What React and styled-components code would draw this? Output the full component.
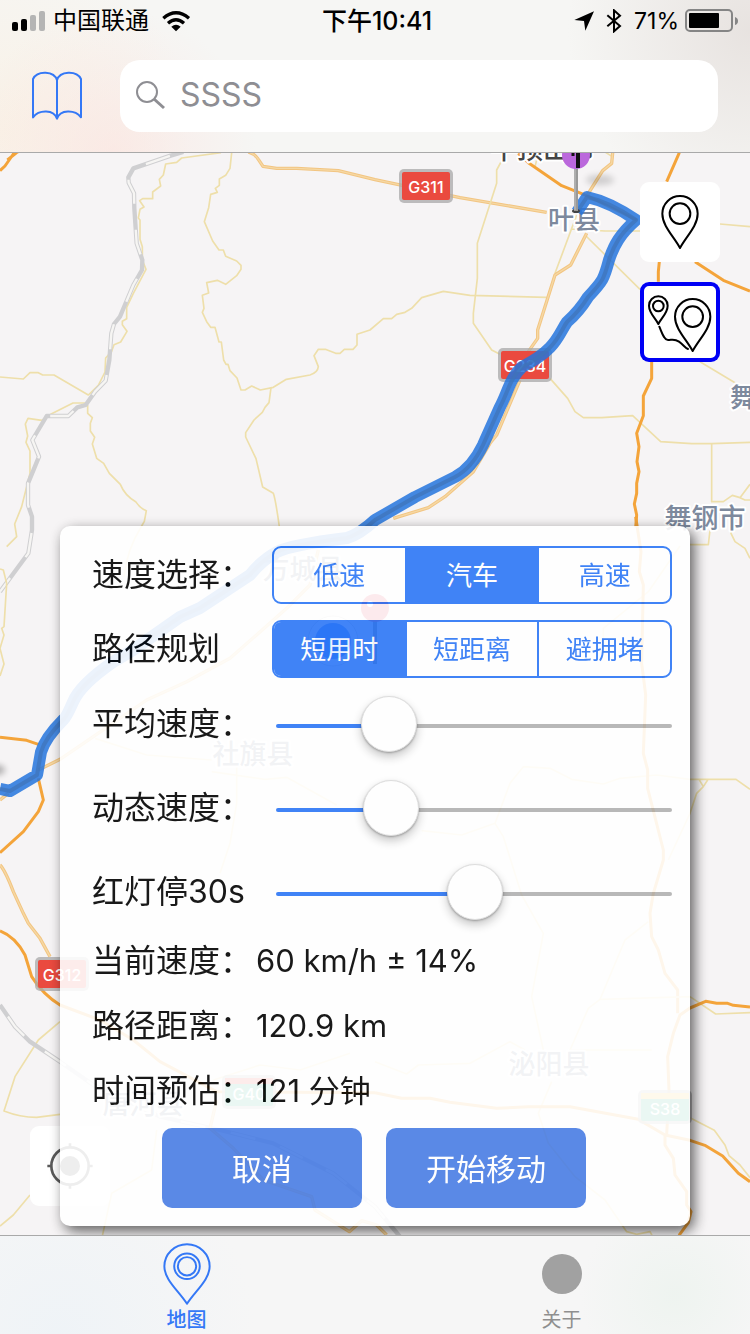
import React, { useState } from "react";
import styled, { createGlobalStyle, css } from "styled-components";

const BLUE = "#2c77f7";

const GlobalStyle = createGlobalStyle`
  *, *::before, *::after { box-sizing: border-box; }
  body {
    margin: 0;
    font-family: Inter, "Noto Sans CJK SC", sans-serif;
    color: #000;
  }
  button, input { font: inherit; }
`;

const Page = styled.div`
  min-height: 100vh;
  display: flex;
  flex-direction: column;
`;

/* ---------- header ---------- */

const Header = styled.header`
  border-bottom: 1px solid #a9a9a9;
  background:
    radial-gradient(circle at 15% 100%, rgba(252, 226, 222, 0.6), transparent 22%),
    radial-gradient(circle at 0% 85%, rgba(250, 240, 225, 0.7), transparent 25%),
    radial-gradient(circle at 100% 20%, rgba(228, 222, 219, 0.8), transparent 24%),
    #f6f6f4;
`;

const StatusBar = styled.div`
  height: 40px;
  padding: 2px 12px 0;
  display: grid;
  grid-template-columns: 1fr auto 1fr;
  align-items: center;
  font-size: 24px;
  line-height: 38px;
`;

const StatusGroup = styled.div`
  display: flex;
  align-items: center;
  gap: ${(p) => p.$gap}px;
  justify-content: ${(p) => (p.$end ? "flex-end" : "flex-start")};
`;

const Time = styled.time`
  padding-left: 4px;
  font-size: 25px;
  font-weight: 500;
`;

const Signal = styled.div`
  display: flex;
  align-items: flex-end;
  gap: 3px;
`;

const SignalBar = styled.span`
  width: 6px;
  height: ${(p) => p.$height}px;
  border-radius: 2px;
  background: ${(p) => (p.$on ? "#000" : "#b5b5b4")};
`;

const Percent = styled.span`
  font-size: 23px;
`;

const NavRow = styled.div`
  display: flex;
  align-items: center;
  gap: 36px;
  padding: 20px 32px;
`;

const BookButton = styled.button`
  display: flex;
  padding: 0;
  border: 0;
  background: none;
  color: #3478f6;
`;

const SearchBox = styled.label`
  flex: 1;
  min-width: 0;
  height: 72px;
  display: flex;
  align-items: center;
  gap: 14px;
  padding: 0 16px 2px;
  border-radius: 20px;
  background: #fff;
  color: #8e8e93;
`;

const SearchInput = styled.input`
  flex: 1;
  width: 100%;
  min-width: 0;
  padding: 0;
  border: 0;
  outline: 0;
  background: none;
  font-size: 32px;
  line-height: 40px;
  color: #8e8e93;
  &::placeholder { color: #8e8e93; opacity: 1; }
`;

/* ---------- map ---------- */

const MapArea = styled.main`
  position: relative;
  flex: 1;
  display: flex;
  flex-direction: column;
  justify-content: space-between;
  overflow: hidden;
  background: #f6f4f5;
`;

const MapSvg = styled.svg`
  position: absolute;
  inset: 0;
  width: 100%;
  height: 100%;
`;

const MapTools = styled.div`
  position: relative;
  display: flex;
  flex-direction: column;
  align-items: flex-end;
  gap: 20px;
  padding: 29px 30px;
`;

const MapButton = styled.button`
  display: flex;
  padding: 0;
  width: 80px;
  height: 80px;
  border: 0;
  border-radius: 9px;
  background: #fff;
  ${(p) => p.$active && css`box-shadow: inset 0 0 0 4px #0000f5;`}
`;

const LocateButton = styled(MapButton)`
  position: absolute;
  left: 30px;
  bottom: 29px;
`;

/* ---------- panel ---------- */

const Panel = styled.section`
  position: relative;
  margin: 0 60px 9px;
  padding: 20px 18px 18px 32px;
  border-radius: 10px;
  background: #fff;
  opacity: 0.9;
  box-shadow: 4px 5px 14px rgba(0, 0, 0, 0.7);
  font-size: 32px;
`;

const Stack = styled.div`
  display: flex;
  flex-direction: column;
  gap: ${(p) => p.$gap}px;
  margin-bottom: ${(p) => p.$after}px;
`;

const FieldRow = styled.div`
  display: grid;
  grid-template-columns: 180px 1fr;
  align-items: center;
  white-space: nowrap;
`;

const fieldName = css`
  line-height: 48px;
`;

const GroupName = styled.span`${fieldName}`;
const FieldName = styled.label`${fieldName}`;

const Segments = styled.div`
  display: flex;
  height: 58px;
  border: 2px solid ${BLUE};
  border-radius: 9px;
  overflow: hidden;
`;

const Segment = styled.label`
  position: relative;
  flex: 1;
  display: flex;
  align-items: center;
  justify-content: center;
  padding-bottom: 4px;
  font-size: 26px;
  color: ${(p) => (p.$on ? "#fff" : BLUE)};
  background: ${(p) => (p.$on ? BLUE : "transparent")};
  & + & { border-left: 2px solid ${BLUE}; }
  input {
    position: absolute;
    inset: 0;
    margin: 0;
    opacity: 0;
  }
`;

const thumb = css`
  appearance: none;
  width: 56px;
  height: 56px;
  margin-top: -28px;
  border: 1px solid #dcdcdc;
  border-radius: 50%;
  background: #fff;
  box-shadow: 0 5px 10px rgba(0, 0, 0, 0.24), 0 1px 2px rgba(0, 0, 0, 0.3);
`;

const Slider = styled.input`
  appearance: none;
  justify-self: stretch;
  height: 56px;
  margin: 0 0 0 4px;
  padding: 4px 0 0;
  background: none;
  &::-webkit-slider-runnable-track {
    height: 4px;
    border-radius: 2px;
    background: linear-gradient(to right, ${BLUE} var(--fill), #b2b2b2 var(--fill));
  }
  &::-webkit-slider-thumb { ${thumb} }
`;

const InfoList = styled.dl`
  margin: 0 0 5px;
`;

const InfoRow = styled.div`
  display: flex;
  gap: 4px;
  line-height: 65px;
  dt, dd { margin: 0; }
  dd { font-size: 31px; }
`;

const Actions = styled.div`
  display: flex;
  justify-content: center;
  gap: 24px;
  padding-right: 16px;
`;

const ActionButton = styled.button`
  width: 200px;
  height: 80px;
  padding: 0 0 2px;
  border: 0;
  border-radius: 10px;
  background: #497de5;
  color: #fff;
  font-size: 30px;
`;

/* ---------- tab bar ---------- */

const TabBar = styled.nav`
  display: flex;
  height: 99px;
  border-top: 1px solid #a9a9a9;
  background:
    radial-gradient(circle at 90% 60%, rgba(236, 243, 238, 0.8), transparent 14%),
    radial-gradient(circle at 8% 100%, rgba(238, 243, 247, 0.9), transparent 28%),
    #f6f6f6;
`;

const Tab = styled.a`
  flex: 1;
  display: flex;
  flex-direction: column;
  align-items: center;
  justify-content: space-between;
  padding: 7px 2px 0 0;
  font-size: 20px;
  line-height: 28px;
  text-decoration: none;
  color: ${(p) => (p.$on ? "#3478f6" : "#8f8f8f")};
  font-weight: ${(p) => (p.$on ? 500 : 400)};
`;

const Dot = styled.span`
  width: 40px;
  height: 40px;
  margin-top: 11px;
  border-radius: 50%;
  background: #a1a1a1;
`;

/* ---------- icons ---------- */

const WifiIcon = () => (
  <svg width="30" height="22" viewBox="486 26 90 66" aria-hidden="true">
    <g fill="none" stroke="#000" strokeWidth="10">
      <path d="M493 51 Q531 18 570 51" />
      <path d="M507 66 Q531 45 555 66" />
    </g>
    <path d="M517 76 Q531 65 545 76 L531 90Z" />
  </svg>
);

const ArrowIcon = () => (
  <svg width="20" height="20" viewBox="603 33 60 60" aria-hidden="true">
    <path d="M663 34 L604 60 L633 63 L637 92Z" />
  </svg>
);

const BluetoothIcon = () => (
  <svg width="16" height="24" viewBox="696 25 48 72" aria-hidden="true">
    <path d="M700 44 L738 76 L720 92 V29 L738 45 L700 77" fill="none" stroke="#000" strokeWidth="6" />
  </svg>
);

const BatteryIcon = () => (
  <svg width="53" height="24" viewBox="0 0 53 24" aria-hidden="true">
    <rect x="1" y="1" width="46" height="21" rx="4" fill="none" stroke="#858585" strokeWidth="2" />
    <rect x="4" y="4" width="30" height="15" rx="1" />
    <path d="M50 8 Q53 9 53 12 Q53 15 50 16Z" fill="#858585" />
  </svg>
);

const BookIcon = () => (
  <svg width="52" height="50" viewBox="96 210 156 150" fill="none" stroke="currentColor" strokeWidth="6" strokeLinejoin="round" aria-hidden="true">
    <path d="M99 349 V234 C112 208 163 209 171 238 C179 209 230 208 243 234 V349 C225 325 180 325 171 353 C162 325 117 325 99 349Z M171 238 V353" />
  </svg>
);

const SearchIcon = () => (
  <svg width="30" height="30" viewBox="0 0 30 30" fill="none" stroke="currentColor" strokeWidth="2" aria-hidden="true">
    <circle cx="11" cy="12" r="10" />
    <path d="M18 19 L28 28" strokeWidth="3" />
  </svg>
);

const pinPath = "M120 198 C102 164 67 132 67 95 A53 53 0 0 1 173 95 C173 132 138 164 120 198Z";

const PinIcon = () => (
  <svg width="80" height="80" viewBox="0 0 240 240" fill="none" stroke="#000" strokeWidth="6" strokeLinejoin="round" aria-hidden="true">
    <path d={pinPath} />
    <circle cx="120" cy="95" r="31" />
  </svg>
);

const RouteIcon = () => (
  <svg width="80" height="80" viewBox="0 0 240 240" fill="none" stroke="#000" strokeWidth="6" strokeLinejoin="round" strokeLinecap="round" aria-hidden="true">
    <path d={pinPath} transform="translate(38 9)" />
    <circle cx="158" cy="104" r="31" />
    <path d="M55 126 C46 108 27 93 27 71 A28 28 0 0 1 83 71 C83 93 64 108 55 126Z" />
    <circle cx="55" cy="72" r="16" />
    <path d="M58 134 C66 152 72 174 84 174 S103 169 117 179 S136 198 144 201" />
  </svg>
);

const LocateIcon = () => (
  <svg width="80" height="80" viewBox="0 0 240 240" aria-hidden="true">
    <g fill="none" stroke="#5a5a5a" strokeWidth="8">
      <circle cx="120" cy="120" r="56" />
      <path d="M120 52 V66 M120 174 V188 M52 120 H66 M174 120 H188" />
    </g>
    <circle cx="120" cy="120" r="30" fill="#5a5a5a" />
  </svg>
);

const TabPinIcon = () => (
  <svg width="52" height="64" viewBox="483 1027 156 192" fill="none" stroke="currentColor" strokeWidth="6" strokeLinejoin="round" aria-hidden="true">
    <path d="M561 1212 C535 1172 492 1139 492 1098 A69 67 0 0 1 630 1098 C630 1139 587 1172 561 1212Z" />
    <circle cx="561" cy="1098" r="39" />
    <circle cx="561" cy="1098" r="28" />
  </svg>
);

/* ---------- map drawing ---------- */

/* Map tiles are drawn at three units to the pixel. */
const Tile = ({ x, y, children }) => (
  <svg x={x} y={y} width="375" height="380" viewBox="0 0 1125 1140" overflow="visible" fill="none" strokeLinejoin="round">
    {children}
  </svg>
);

const Minor = ({ d }) => <path d={d} stroke="#eedfaa" strokeWidth="5" />;
const Second = ({ d }) => (
  <>
    <path d={d} stroke="#f2c582" strokeWidth="10" />
    <path d={d} stroke="#f6d8a4" strokeWidth="4" />
  </>
);
const Major = ({ d }) => <path d={d} stroke="#f4a43a" strokeWidth="9" />;
const Rail = ({ d }) => (
  <>
    <path d={d} stroke="#cfcfd1" strokeWidth="13" />
    <path d={d} stroke="#f6f5f3" strokeWidth="7" strokeDasharray="76 78" strokeDashoffset="-42" />
  </>
);

const Place = ({ x, y, size = 27, color = "#7d899d", children }) => (
  <text x={x} y={y} fontSize={size} fontWeight="500" fill={color} stroke="#fff" strokeWidth="4" strokeLinejoin="round" paintOrder="stroke" textAnchor="middle">
    {children}
  </text>
);

const Shield = ({ x, y, name, fill = "#ea4a3f", top }) => (
  <g>
    <rect x={x - 27} y={y - 17} width="54" height="34" rx="5" fill="#a8a8a8" opacity="0.75" />
    <rect x={x - 24} y={y - 14} width="48" height="28" rx="2" fill={fill} />
    {top && <rect x={x - 24} y={y - 14} width="48" height="6" fill={top} />}
    <text x={x} y={y + (top ? 8 : 7)} fontSize="16" fontWeight="500" fill="#fff" textAnchor="middle">{name}</text>
  </g>
);

const ROUTE =
  "M577 212 L587 197 Q610 202 636 220 C620 234 614 245 609 260 C604 279 603 281 588 297 C580 310 575 315 567 322 C558 335 557 349 522 367 C510 378 508 392 500 407 L483 445 Q472 468 455 477 L415 497 L375 520 Q360 534 347 538 Q290 545 277 552 Q262 560 250 575 L200 608 L180 617 L133 650 L113 662 Q80 685 73 702 Q66 718 63 720 C50 733 44 742 41 752 L37 775 L10 791 L0 789";

const MapDrawing = () => (
  <MapSvg viewBox="0 153 750 1082" preserveAspectRatio="xMidYMid slice" role="img" aria-label="地图">
    <Tile x="0" y="150">
      <Minor d="M663 8 L545 24 L530 37 L497 42 L490 75 L478 88 L482 108 L458 126 V146 H428 L419 152 L432 171 L420 178 L415 204 L420 210 V268 L427 290 V330 L438 358 L400 430 L380 472 V506 L367 514 V524 L381 544 L362 576 L342 584 L335 604 L317 624 L315 666 L295 706 L265 735 L162 675 H128 L115 668 H90 L70 687 L0 681" />
      <Minor d="M257 759 H219 L152 793 L125 811 L84 805 L76 822 L83 858 L78 877 L90 903 V970 L65 1070 L44 1122 L50 1160 L20 1190" />
      <Minor d="M263 765 V790 L277 803 L271 820 V843 L284 862 L277 882 L290 925 L311 940 L328 970 L361 1003 Q374 1036 407 1055 Q420 1075 439 1082 L433 1114 L425 1128 Q380 1200 372 1280" />
      <Minor d="M695 8 L690 55 L677 76 L658 87 V106 L646 115 L652 127 L632 133 L626 173 L613 215 L638 273 L657 300 H670 L677 319 L710 333 L723 346 V358 L710 377 L677 403 L652 391 L620 398 L626 429 L607 436 L612 475 L607 487 L620 515 L632 532 H645 L657 576 H664 L671 630 L678 643 H684 L690 662 L711 684 L723 720 H735 L755 708 L781 720 L820 712 L859 688 L930 675 Q953 668 955 650 L942 617 L955 598 H976 L1007 610 H1020 L1033 598 H1059 L1071 585 V553 L1110 540 L1150 506 H1175 L1190 493 L1215 487 L1235 475 L1265 443 L1330 424 L1410 436 L1640 442" />
      <Minor d="M813 713 L807 758 L795 772 L787 787 L762 810 L737 848 V861 L768 926 L788 1011 L820 1030 Q827 1050 838 1130" />
      <Rail d="M550 6 L512 17 L400 55 L385 82 L386 98 L402 130 L403 175 L410 280 L427 330 L426 360 L400 405 L360 500 L342 522 L334 550 L328 630 L317 692 L285 725 L257 765 L232 772 L205 798 H140 L97 870 L117 920 L84 1000 V1065 L96 1100 V1140 L85 1210 L0 1325" />
      <Major d="M55 5 L40 12 L15 48 L0 62 M22 30 L50 8" />
      <Second d="M745 6 Q765 12 775 28 L789 49 L830 55 H890 L1015 62 L1125 89 L1380 143 L1640 187" />
    </Tile>

    <Tile x="375" y="150">
      <Minor d="M378 36 L365 60 V100 L307 280 V385 L295 490 V520 L350 600 L375 613 M525 685 L578 745 L600 785 L625 803 H680 L773 797 L857 875 L950 881 H1010 L1125 877 M1010 881 V1055 H1045 L1072 1036 L1095 1043 L1125 1003 M1095 1043 L1110 1050 H1125 M1068 1065 V1150 L1080 1175 L1110 1195 L1125 1225" />
      <Minor d="M605 195 L540 370 M590 237 L690 243 H795 M630 255 L795 418 M1035 222 L1125 230 M975 635 L1125 725 M480 50 L485 30 M690 6 L712 20" />
      <Second d="M713 8 L710 40 L683 62 L637 135 M635 250 L587 345 L540 375 L488 540 V565 L460 605 M435 690 L365 855 L345 880 L295 965 L210 1040 L160 1073 L55 1105" />
      <Major d="M430 10 L460 38 L560 107 L635 137 L785 210" />
      <Major d="M913 8 L875 95 M853 335 L850 365 V395 M960 335 L1045 391 L1125 423 M830 635 V685 L805 738 V797 L785 850 L792 890 L786 935 L792 965 L785 1000 V1030 L778 1062 L785 1095 L782 1132" />
    </Tile>

    <Tile x="0" y="520">
      <Minor d="M0 147 L10 150 L20 190 M20 190 L12 320 L5 325 L12 345 L0 385 M0 385 L12 432 L0 468" />
      <Minor d="M285 655 L440 705 L635 720 M635 755 L795 778 L860 772 L1010 855 M710 740 V850 L690 970 L660 1060" />
      <Second d="M115 750 L180 718 L280 650 L440 540 L560 485 L690 415 L860 265 L930 195 L955 90" />
      <Second d="M0 840 L25 820 M0 1035 Q15 1050 40 1115 L70 1180 L85 1210 L120 1255 L150 1310" />
      <Major d="M0 652 L80 661 L115 673" />
      <Major d="M115 775 L130 840 L115 875 L70 935 L0 998" />
    </Tile>

    <Tile x="375" y="520">
      <Minor d="M945 74 H1000 L1005 30 M915 78 L820 215 L685 325 V400 M945 778 H1083 L1125 808 M972 778 L985 800 L998 780 M985 800 L965 820 L945 880 L880 1020 M945 778 L845 765 L735 775 L685 792 L590 778 L525 745 L445 740 L405 790 L360 910 L260 945 L140 932 M360 910 L385 950 L440 1125 L505 1240 L470 1430 L505 1590" />
      <Major d="M782 -10 L798 95 L793 155 L805 195 L800 430 L812 525 L805 700 L818 750 V805 L865 990 V1020 L835 1120 L825 1180 L830 1250 L850 1290 L870 1360 L908 1410 V1480" />
    </Tile>

    <Tile x="0" y="900">
      <Minor d="M180 365 L115 420 L45 530 L12 633 Q60 652 110 652 L180 643 M0 978 L40 945 L90 885 M307 1008 L335 880 L455 810 L470 690" />
      <Minor d="M640 540 L780 495 L900 510 L1050 460" />
      <Rail d="M0 315 L45 380 L90 425 L180 485 L280 555 L480 650 L660 690 L820 730 L1000 820 L1125 920 L1200 1010" />
      <Major d="M0 93 Q45 110 75 165 L95 230 Q130 285 180 315 L300 360 L400 420 L480 485 L650 575 L1125 578" />
      <Second d="M650 600 L630 685 L700 745 L790 840 L935 890 L945 930 L1048 995 L1085 962 L1130 975 L1160 1005" />
    </Tile>

    <Tile x="375" y="900">
      <Minor d="M945 290 L1022 342 L1125 338 M945 290 L675 298 L640 325 L585 450 H830 M675 298 L750 120 L820 65 M0 485 L95 522 L130 495 L285 490 L405 425 L450 450 M530 545 L490 640 L520 730 L600 830 L690 900 L755 995 L785 1003 L825 995 L832 1008 M945 653 L1018 691 L1050 735 L1062 767 L1095 795 L1125 833" />
      <Major d="M945 324 L992 304 L1025 310 H1058 L1075 316 L1125 321 M945 324 L915 345 L895 400 L878 470 L882 570 L875 705" />
      <Major d="M0 578 L80 595 H165 L225 607 L365 625 L460 620 H585 L790 658 L870 705 L945 721 L992 737 L1043 768 L1090 820 L1125 845 M870 705 V735 L895 775 L900 825 L935 875 V915 L948 935 L940 968 L912 1006" />
    </Tile>

    <Place x="543" y="159" size={26} color="#444">平顶山市</Place>
    <Place x="574" y="229" size={26}>叶县</Place>
    <Place x="743" y="407" size={26}>舞</Place>
    <Place x="705" y="528">舞钢市</Place>
    <Place x="303" y="579">方城县</Place>
    <Place x="253" y="764">社旗县</Place>
    <Place x="549" y="1074">泌阳县</Place>
    <Place x="143" y="1114">唐河县</Place>

    <Shield x={426} y={186} name="G311" />
    <Shield x={525} y={365} name="G234" />
    <Shield x={62} y={974} name="G312" />
    <Shield x={249} y={1092} name="G40" fill="#35b08a" top="#ea4a3f" />
    <Shield x={665} y={1107} name="S38" fill="#35b08a" top="#f5c34a" />

    <g fill="none" strokeLinejoin="round">
      <path d={ROUTE} stroke="#2474dd" strokeWidth="12" opacity="0.85" />
      <path d={ROUTE} stroke="#3f74b8" strokeWidth="4" opacity="0.7" />
    </g>

    <ellipse cx="600" cy="180" rx="14" ry="5" fill="#000" opacity="0.16" filter="url(#pinShadow)" />
    <ellipse cx="-4" cy="770" rx="9" ry="5" fill="#000" opacity="0.3" filter="url(#pinShadow)" />
    <defs>
      <filter id="pinShadow" x="-50%" y="-100%" width="200%" height="300%">
        <feGaussianBlur stdDeviation="3" />
      </filter>
    </defs>
    <ellipse cx="576" cy="211" rx="4" ry="2" fill="#444" />
    <path d="M576 165 V211" stroke="#999" strokeWidth="4" />
    <path d="M575 165 V210" stroke="#c4c4c4" strokeWidth="1" />
    <circle cx="576" cy="155" r="14" fill="#bb68dc" />
    <path d="M578 150 V168" stroke="#111" strokeWidth="4" />
    <path d="M573 153 V156" stroke="#111" strokeWidth="3" />

    <circle cx="333" cy="641" r="25" fill="#fff" stroke="#ccc" />
    <circle cx="333" cy="641" r="18" fill="#2b74ee" />
    <path d="M375 620 V664" stroke="#777" strokeWidth="4" />
    <circle cx="375" cy="608" r="14" fill="#e0334f" />
    <circle cx="370" cy="604" r="3" fill="#fff" />
  </MapSvg>
);

/* ---------- controls ---------- */

const SegmentedRow = ({ label, name, options, initial }) => {
  const [value, setValue] = useState(initial);
  return (
    <FieldRow role="radiogroup" aria-labelledby={`${name}-label`}>
      <GroupName id={`${name}-label`}>{label}</GroupName>
      <Segments>
        {options.map((option) => (
          <Segment key={option} $on={option === value}>
            <input type="radio" name={name} checked={option === value} onChange={() => setValue(option)} />
            {option}
          </Segment>
        ))}
      </Segments>
    </FieldRow>
  );
};

const SliderRow = ({ label, id, initial }) => {
  const [value, setValue] = useState(initial);
  return (
    <FieldRow>
      <FieldName htmlFor={id}>{label}</FieldName>
      <Slider
        id={id}
        type="range"
        min="0"
        max="1000"
        value={value}
        onChange={(e) => setValue(Number(e.target.value))}
        style={{ "--fill": `${value / 10}%` }}
      />
    </FieldRow>
  );
};

export default function App() {
  return (
    <Page>
      <GlobalStyle />
      <Header>
        <StatusBar>
          <StatusGroup $gap={8}>
            <Signal>
              <SignalBar $height={9} $on />
              <SignalBar $height={12} $on />
              <SignalBar $height={16} />
              <SignalBar $height={20} />
            </Signal>
            <StatusGroup $gap={12}>
              <span>中国联通</span>
              <WifiIcon />
            </StatusGroup>
          </StatusGroup>
          <Time>下午10:41</Time>
          <StatusGroup $gap={12} $end>
            <ArrowIcon />
            <BluetoothIcon />
            <StatusGroup $gap={6}>
              <Percent>71%</Percent>
              <BatteryIcon />
            </StatusGroup>
          </StatusGroup>
        </StatusBar>
        <NavRow>
          <BookButton type="button" aria-label="书签"><BookIcon /></BookButton>
          <SearchBox>
            <SearchIcon />
            <SearchInput type="search" placeholder="SSSS" aria-label="搜索" />
          </SearchBox>
        </NavRow>
      </Header>

      <MapArea>
        <MapDrawing />
        <MapTools>
          <MapButton type="button" aria-label="定点"><PinIcon /></MapButton>
          <MapButton type="button" aria-label="路线" $active><RouteIcon /></MapButton>
        </MapTools>
        <LocateButton type="button" aria-label="定位"><LocateIcon /></LocateButton>

        <Panel>
          <Stack $gap={16} $after={18}>
            <SegmentedRow label="速度选择：" name="speed" options={["低速", "汽车", "高速"]} initial="汽车" />
            <SegmentedRow label="路径规划" name="plan" options={["短用时", "短距离", "避拥堵"]} initial="短用时" />
          </Stack>
          <Stack $gap={28} $after={8}>
            <SliderRow label="平均速度：" id="average" initial={250} />
            <SliderRow label="动态速度：" id="dynamic" initial={256} />
            <SliderRow label="红灯停30s" id="redlight" initial={503} />
          </Stack>
          <InfoList>
            <InfoRow><dt>当前速度：</dt><dd>60 km/h ± 14%</dd></InfoRow>
            <InfoRow><dt>路径距离：</dt><dd>120.9 km</dd></InfoRow>
            <InfoRow><dt>时间预估：</dt><dd>121 分钟</dd></InfoRow>
          </InfoList>
          <Actions>
            <ActionButton type="button">取消</ActionButton>
            <ActionButton type="button">开始移动</ActionButton>
          </Actions>
        </Panel>
      </MapArea>

      <TabBar>
        <Tab href="#map" $on aria-current="page"><TabPinIcon />地图</Tab>
        <Tab href="#about"><Dot />关于</Tab>
      </TabBar>
    </Page>
  );
}
